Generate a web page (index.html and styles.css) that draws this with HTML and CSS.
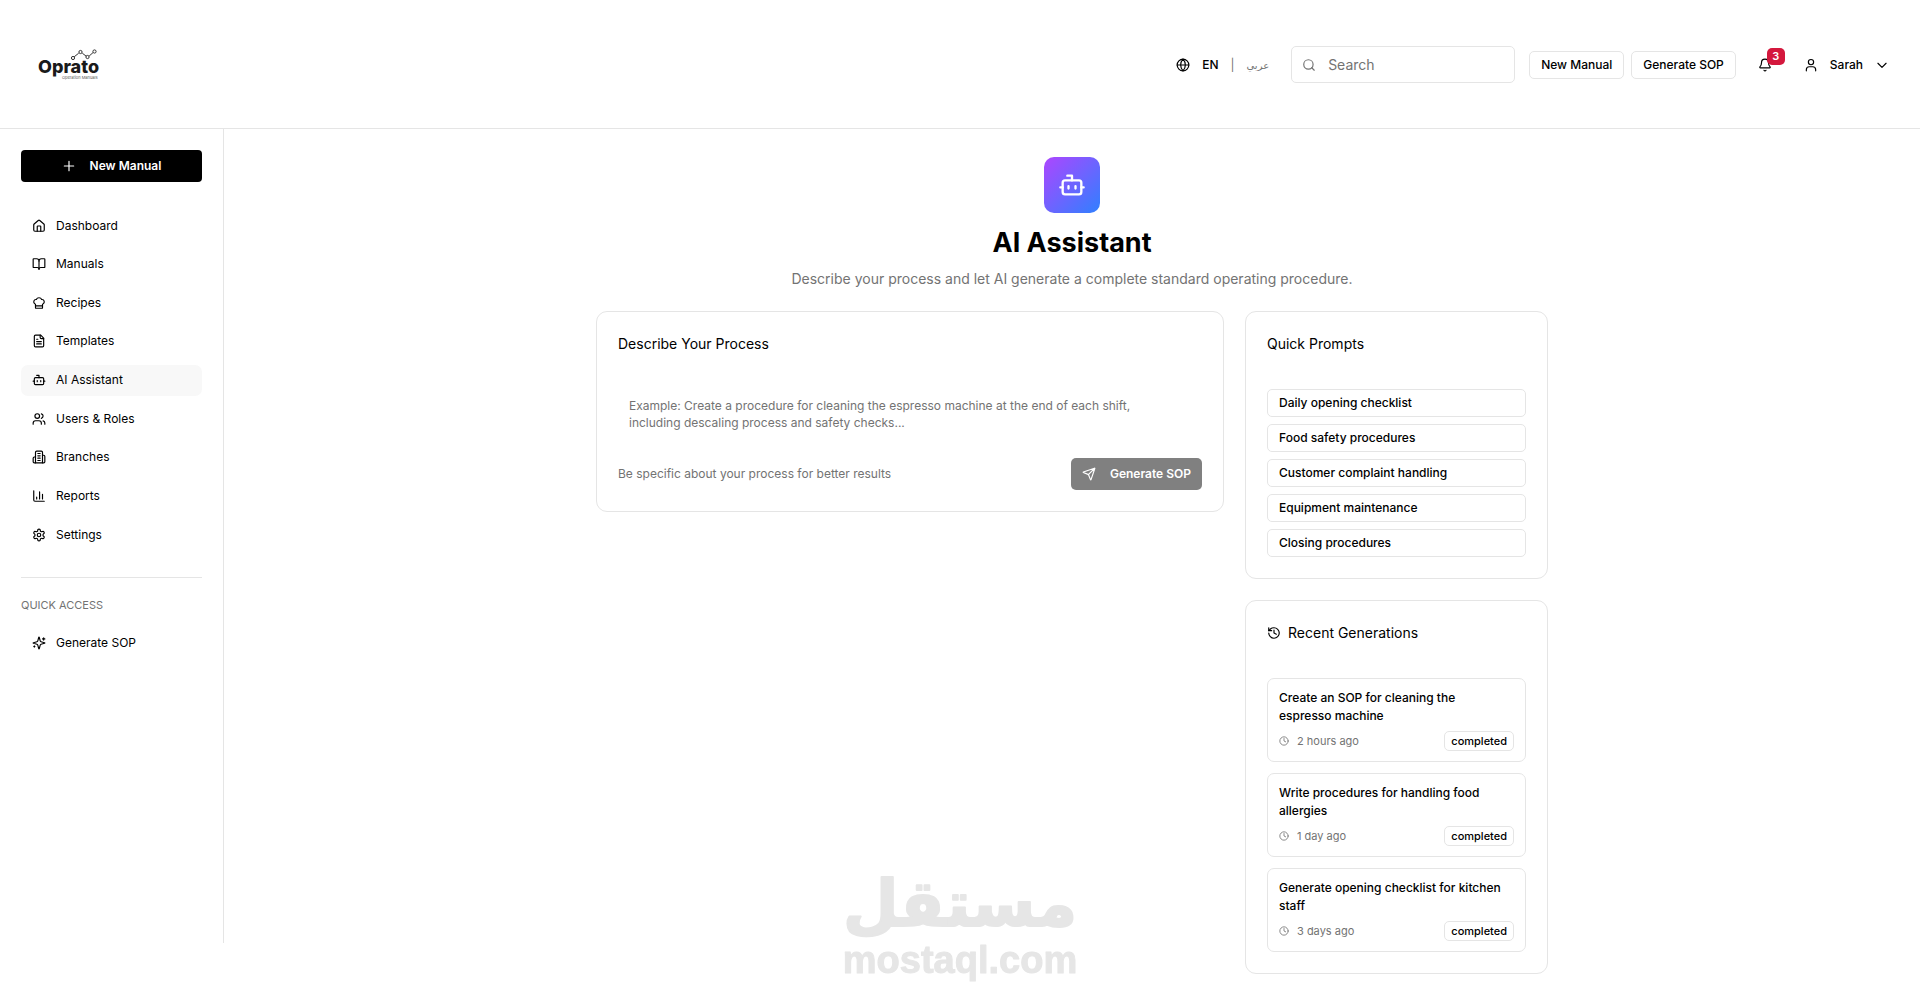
FILE: index.html
```
<!DOCTYPE html>
<html lang="en">
<head>
    <meta charset="UTF-8">
    <meta name="viewport" content="width=device-width, initial-scale=1.0">
    <title>Oprato - AI Assistant</title>
    <link rel="stylesheet" href="styles.css">
</head>
<body>

    <!-- Header -->
    <header class="header">
        <a href="#" class="logo" aria-label="Oprato">
            <svg width="64" height="32" viewBox="0 0 64 32">
                <g fill="none" stroke="#333" stroke-width="1">
                    <path d="M37.2 7.8 41.7 4.2M45.3 4.2 49.2 7.2M52.2 7 56 3.6"/>
                    <circle cx="36" cy="9" r="1.6"/>
                    <circle cx="43.5" cy="3" r="1.6"/>
                    <circle cx="50.5" cy="8" r="1.6"/>
                    <circle cx="57.5" cy="2.5" r="1.6"/>
                </g>
                <text class="logo-name" x="1" y="24">Oprato</text>
                <text class="logo-tag" x="25" y="30">Operation Manuals</text>
            </svg>
        </a>

        <div class="header-actions">
            <div class="lang">
                <svg class="icon" viewBox="0 0 24 24"><circle cx="12" cy="12" r="10"/><path d="M12 2a14.5 14.5 0 0 0 0 20 14.5 14.5 0 0 0 0-20M2 12h20"/></svg>
                <button class="lang-btn">EN</button>
                <span class="lang-sep">|</span>
                <button class="lang-btn" lang="ar">عربي</button>
            </div>

            <label class="search">
                <svg class="icon" viewBox="0 0 24 24"><circle cx="11" cy="11" r="8"/><path d="m21 21-4.3-4.3"/></svg>
                <input type="search" placeholder="Search" aria-label="Search">
            </label>

            <div class="header-buttons">
                <button class="btn-outline">New Manual</button>
                <button class="btn-outline">Generate SOP</button>
            </div>

            <button class="bell-btn" aria-label="Notifications">
                <svg class="icon" viewBox="0 0 24 24"><path d="M10.268 21a2 2 0 0 0 3.464 0"/><path d="M3.262 15.326A1 1 0 0 0 4 17h16a1 1 0 0 0 .74-1.673C19.41 13.956 18 12.499 18 8A6 6 0 0 0 6 8c0 4.499-1.411 5.956-2.738 7.326"/></svg>
                <span class="badge">3</span>
            </button>

            <button class="user-btn">
                <svg class="icon" viewBox="0 0 24 24"><circle cx="12" cy="7" r="4.5"/><path d="M4 22v-2a5 5 0 0 1 5-5h6a5 5 0 0 1 5 5v2"/></svg>
                <span>Sarah</span>
                <svg class="icon" viewBox="0 0 24 24"><path d="m5 9 7 7 7-7"/></svg>
            </button>
        </div>
    </header>

    <div class="layout">
        <!-- Sidebar -->
        <aside class="sidebar">
            <button class="new-manual">
                <svg class="icon" viewBox="0 0 24 24"><path d="M4 12h16M12 4v16"/></svg>
                New Manual
            </button>

            <nav class="nav">
                <a href="#" class="nav-item">
                    <svg class="icon" viewBox="0 0 24 24"><path d="M15 21v-8a1 1 0 0 0-1-1h-4a1 1 0 0 0-1 1v8"/><path d="M3 10a2 2 0 0 1 .709-1.528l7-5.999a2 2 0 0 1 2.582 0l7 5.999A2 2 0 0 1 21 10v9a2 2 0 0 1-2 2H5a2 2 0 0 1-2-2z"/></svg>
                    Dashboard
                </a>
                <a href="#" class="nav-item">
                    <svg class="icon" viewBox="0 0 24 24"><path d="M12 7v14"/><path d="M3 18a1 1 0 0 1-1-1V4a1 1 0 0 1 1-1h5a4 4 0 0 1 4 4 4 4 0 0 1 4-4h5a1 1 0 0 1 1 1v13a1 1 0 0 1-1 1h-6a3 3 0 0 0-3 3 3 3 0 0 0-3-3z"/></svg>
                    Manuals
                </a>
                <a href="#" class="nav-item">
                    <svg class="icon" viewBox="0 0 24 24"><path d="M17 21a1 1 0 0 0 1-1v-5.35c0-.457.316-.844.727-1.041a4 4 0 0 0-2.134-7.589 5 5 0 0 0-9.186 0 4 4 0 0 0-2.134 7.588c.411.198.727.585.727 1.041V20a1 1 0 0 0 1 1Z"/><path d="M6 17h12"/></svg>
                    Recipes
                </a>
                <a href="#" class="nav-item">
                    <svg class="icon" viewBox="0 0 24 24"><path d="M15 2H6a2 2 0 0 0-2 2v16a2 2 0 0 0 2 2h12a2 2 0 0 0 2-2V7Z"/><path d="M14 2v4a2 2 0 0 0 2 2h4M10 9H8M16 13H8M16 17H8"/></svg>
                    Templates
                </a>
                <a href="#" class="nav-item active">
                    <svg class="icon" viewBox="0 0 24 24"><path d="M12 8V4H8"/><rect width="16" height="12" x="4" y="8" rx="2"/><path d="M2 14h2M20 14h2M15 13v2M9 13v2"/></svg>
                    AI Assistant
                </a>
                <a href="#" class="nav-item">
                    <svg class="icon" viewBox="0 0 24 24"><path d="M16 21v-2a4 4 0 0 0-4-4H6a4 4 0 0 0-4 4v2"/><circle cx="9" cy="7" r="4"/><path d="M22 21v-2a4 4 0 0 0-3-3.87M16 3.13a4 4 0 0 1 0 7.75"/></svg>
                    Users &amp; Roles
                </a>
                <a href="#" class="nav-item">
                    <svg class="icon" viewBox="0 0 24 24"><path d="M6 22V4a2 2 0 0 1 2-2h8a2 2 0 0 1 2 2v18Z"/><path d="M6 12H4a2 2 0 0 0-2 2v6a2 2 0 0 0 2 2h2M18 9h2a2 2 0 0 1 2 2v9a2 2 0 0 1-2 2h-2M10 6h4M10 10h4M10 14h4M10 18h4"/></svg>
                    Branches
                </a>
                <a href="#" class="nav-item">
                    <svg class="icon" viewBox="0 0 24 24"><path d="M3 3v16a2 2 0 0 0 2 2h16M18 17V9M13 17V5M8 17v-3"/></svg>
                    Reports
                </a>
                <a href="#" class="nav-item">
                    <svg class="icon" viewBox="0 0 24 24"><path d="M12.22 2h-.44a2 2 0 0 0-2 2v.18a2 2 0 0 1-1 1.73l-.43.25a2 2 0 0 1-2 0l-.15-.08a2 2 0 0 0-2.73.73l-.22.38a2 2 0 0 0 .73 2.73l.15.1a2 2 0 0 1 1 1.72v.51a2 2 0 0 1-1 1.74l-.15.09a2 2 0 0 0-.73 2.73l.22.38a2 2 0 0 0 2.73.73l.15-.08a2 2 0 0 1 2 0l.43.25a2 2 0 0 1 1 1.73V20a2 2 0 0 0 2 2h.44a2 2 0 0 0 2-2v-.18a2 2 0 0 1 1-1.73l.43-.25a2 2 0 0 1 2 0l.15.08a2 2 0 0 0 2.73-.73l.22-.39a2 2 0 0 0-.73-2.73l-.15-.08a2 2 0 0 1-1-1.74v-.5a2 2 0 0 1 1-1.74l.15-.09a2 2 0 0 0 .73-2.73l-.22-.38a2 2 0 0 0-2.73-.73l-.15.08a2 2 0 0 1-2 0l-.43-.25a2 2 0 0 1-1-1.73V4a2 2 0 0 0-2-2z"/><circle cx="12" cy="12" r="3"/></svg>
                    Settings
                </a>
            </nav>

            <div class="quick-access">
                <h2 class="quick-title">QUICK ACCESS</h2>
                <a href="#" class="nav-item">
                    <svg class="icon" viewBox="0 0 24 24"><path d="M9.937 15.5A2 2 0 0 0 8.5 14.063l-6.135-1.582a.5.5 0 0 1 0-.962L8.5 9.936A2 2 0 0 0 9.937 8.5l1.582-6.135a.5.5 0 0 1 .963 0L14.063 8.5A2 2 0 0 0 15.5 9.937l6.135 1.581a.5.5 0 0 1 0 .964L15.5 14.063a2 2 0 0 0-1.437 1.437l-1.582 6.135a.5.5 0 0 1-.963 0z"/><path d="M20 3v4M22 5h-4M4 17v2M5 18H3"/></svg>
                    Generate SOP
                </a>
            </div>
        </aside>

        <!-- Main content -->
        <main class="main">
            <div class="content">
                <div class="intro">
                    <div class="intro-icon">
                        <svg class="icon" viewBox="0 0 24 24"><path d="M12 8V4H8"/><rect width="16" height="12" x="4" y="8" rx="2"/><path d="M2 14h2M20 14h2M15 13v2M9 13v2"/></svg>
                    </div>
                    <h1>AI Assistant</h1>
                    <p>Describe your process and let AI generate a complete standard operating procedure.</p>
                </div>

                <div class="columns">
                    <section class="card">
                        <h2 class="card-title"><label for="process">Describe Your Process</label></h2>
                        <textarea id="process" class="process-input" rows="2" placeholder="Example: Create a procedure for cleaning the espresso machine at the end of each shift, including descaling process and safety checks..."></textarea>
                        <div class="process-footer">
                            <span>Be specific about your process for better results</span>
                            <button class="generate-btn" disabled>
                                <svg class="icon" viewBox="0 0 24 24"><path d="M14.536 21.686a.5.5 0 0 0 .937-.024l6.5-19a.496.496 0 0 0-.635-.635l-19 6.5a.5.5 0 0 0-.024.937l7.93 3.18a2 2 0 0 1 1.112 1.11zM21.854 2.147l-10.94 10.939"/></svg>
                                Generate SOP
                            </button>
                        </div>
                    </section>

                    <div class="side">
                        <section class="card">
                            <h2 class="card-title">Quick Prompts</h2>
                            <div class="prompts">
                                <button class="btn-outline">Daily opening checklist</button>
                                <button class="btn-outline">Food safety procedures</button>
                                <button class="btn-outline">Customer complaint handling</button>
                                <button class="btn-outline">Equipment maintenance</button>
                                <button class="btn-outline">Closing procedures</button>
                            </div>
                        </section>

                        <section class="card">
                            <h2 class="card-title">
                                <svg class="icon" viewBox="0 0 24 24"><path d="M3 12a9 9 0 1 0 9-9 9.75 9.75 0 0 0-6.74 2.74L3 8"/><path d="M3 3v5h5M12 7v5l4 2"/></svg>
                                Recent Generations
                            </h2>
                            <div class="recent">
                                <article class="recent-item">
                                    <h3>Create an SOP for cleaning the espresso machine</h3>
                                    <div class="recent-meta">
                                        <svg class="icon" viewBox="0 0 24 24"><circle cx="12" cy="12" r="10"/><path d="M12 6v6l4 2"/></svg>
                                        <span>2 hours ago</span>
                                        <span class="status">completed</span>
                                    </div>
                                </article>
                                <article class="recent-item">
                                    <h3>Write procedures for handling food allergies</h3>
                                    <div class="recent-meta">
                                        <svg class="icon" viewBox="0 0 24 24"><circle cx="12" cy="12" r="10"/><path d="M12 6v6l4 2"/></svg>
                                        <span>1 day ago</span>
                                        <span class="status">completed</span>
                                    </div>
                                </article>
                                <article class="recent-item">
                                    <h3>Generate opening checklist for kitchen staff</h3>
                                    <div class="recent-meta">
                                        <svg class="icon" viewBox="0 0 24 24"><circle cx="12" cy="12" r="10"/><path d="M12 6v6l4 2"/></svg>
                                        <span>3 days ago</span>
                                        <span class="status">completed</span>
                                    </div>
                                </article>
                            </div>
                        </section>
                    </div>
                </div>
            </div>
        </main>
    </div>

    <!-- Watermark -->
    <div class="watermark">
        <svg width="240" height="116" viewBox="0 0 240 116">
            <text class="watermark-ar" x="120" y="52" text-anchor="middle">مستقل</text>
            <text class="watermark-en" x="120" y="99" text-anchor="middle">mostaql.com</text>
        </svg>
    </div>

</body>
</html>
```
FILE: styles.css
```
* {
    box-sizing: border-box;
    margin: 0;
    padding: 0;
}

body {
    font-family: Inter, "Noto Sans", sans-serif;
    font-size: 12px;
    line-height: 18px;
    color: #000;
    background-color: #fff;
}

a {
    color: inherit;
    text-decoration: none;
}

button, input, textarea {
    font: inherit;
    color: inherit;
    background: none;
    border: none;
}

button {
    cursor: pointer;
}

.icon {
    width: 14px;
    height: 14px;
    flex-shrink: 0;
    fill: none;
    stroke: currentColor;
    stroke-width: 2;
    stroke-linecap: round;
    stroke-linejoin: round;
}

/* Header */
.header {
    display: flex;
    justify-content: space-between;
    align-items: center;
    padding: 46px 24px 45px 37px;
    border-bottom: 1px solid #e5e5e5;
}

.logo svg {
    display: block;
}

.logo-name {
    font-size: 18px;
    font-weight: 800;
    fill: #1a1a1a;
}

.logo-tag {
    font-size: 4px;
    fill: #555;
}

.header-actions {
    display: flex;
    align-items: center;
    gap: 14px;
}

.lang {
    display: flex;
    align-items: center;
    gap: 12px;
    margin-right: 8px;
}

.lang-btn {
    font-weight: 500;
}

.lang-btn[lang="ar"] {
    font-family: Inter, "DejaVu Sans", sans-serif;
    font-size: 10px;
    font-weight: 400;
    color: #737373;
}

.lang-sep {
    color: #737373;
}

.search {
    display: flex;
    align-items: center;
    gap: 12px;
    width: 224px;
    height: 37px;
    padding: 0 10px;
    border: 1px solid #e5e5e5;
    border-radius: 5px;
    color: #737373;
}

.search input {
    flex: 1;
    min-width: 0;
    font-size: 14px;
    outline: none;
}

.search input::placeholder,
.process-input::placeholder {
    color: #737373;
    opacity: 1;
}

.header-buttons {
    display: flex;
    gap: 7px;
}

.btn-outline {
    height: 28px;
    padding: 0 11px;
    border: 1px solid #e5e5e5;
    border-radius: 5px;
    font-weight: 500;
    white-space: nowrap;
}

.bell-btn {
    position: relative;
    display: flex;
    padding: 7px;
    margin-left: 1px;
}

.badge {
    position: absolute;
    top: -3px;
    right: -6px;
    width: 18px;
    height: 17px;
    border-radius: 5px;
    background-color: #d4183d;
    color: #fff;
    font-size: 11px;
    font-weight: 600;
    line-height: 16px;
    text-align: center;
}

.user-btn {
    display: flex;
    align-items: center;
    gap: 12px;
    padding: 7px;
    margin-left: 4px;
    font-weight: 500;
}

/* Sidebar */
.layout {
    display: flex;
    align-items: flex-start;
}

.sidebar {
    width: 224px;
    min-height: calc(100vh - 188px);
    padding: 21px;
    border-right: 1px solid #e5e5e5;
    flex-shrink: 0;
}

.new-manual {
    display: flex;
    align-items: center;
    justify-content: center;
    gap: 14px;
    width: 100%;
    height: 32px;
    border-radius: 4px;
    background-color: #000;
    color: #fff;
    font-weight: 600;
}

.nav {
    display: flex;
    flex-direction: column;
    justify-content: space-between;
    min-height: 340px;
    margin-top: 28px;
}

.nav-item {
    display: flex;
    align-items: center;
    gap: 10px;
    height: 31px;
    padding: 0 11px;
    border-radius: 7px;
}

.nav-item.active {
    background-color: #f8f8f8;
}

.quick-access {
    margin-top: 27px;
    padding-top: 18px;
    border-top: 1px solid #e5e5e5;
}

.quick-title {
    margin-bottom: 13px;
    font-size: 11px;
    font-weight: 400;
    color: #737373;
}

/* Main */
.main {
    flex: 1;
    min-width: 0;
    padding: 28px;
}

.content {
    max-width: 952px;
    margin: 0 auto;
}

.intro {
    display: flex;
    flex-direction: column;
    align-items: center;
    text-align: center;
}

.intro-icon {
    display: flex;
    align-items: center;
    justify-content: center;
    width: 56px;
    height: 56px;
    border-radius: 10px;
    background: linear-gradient(135deg, #ad46ff, #3080ff);
    color: #fff;
}

.intro-icon .icon {
    width: 28px;
    height: 28px;
}

.intro h1 {
    margin-top: 14px;
    font-size: 27px;
    font-weight: 700;
    line-height: 32px;
}

.intro p {
    margin-top: 10px;
    font-size: 14px;
    line-height: 20px;
    color: #737373;
}

.columns {
    display: grid;
    grid-template-columns: minmax(0, 628fr) minmax(0, 303fr);
    align-items: start;
    gap: 21px;
    margin-top: 22px;
}

.side {
    display: flex;
    flex-direction: column;
    gap: 21px;
}

.card {
    padding: 20px 21px 21px;
    border: 1px solid #e5e5e5;
    border-radius: 11px;
}

.card-title {
    display: flex;
    align-items: center;
    gap: 7px;
    margin-bottom: 33px;
    font-size: 14px;
    font-weight: 400;
    line-height: 24px;
}

.process-input {
    display: block;
    width: 100%;
    height: 55px;
    padding: 8px 21px 8px 11px;
    line-height: 17px;
    resize: none;
    outline: none;
}

.process-footer {
    display: flex;
    align-items: center;
    justify-content: space-between;
    margin-top: 14px;
    color: #737373;
}

.generate-btn {
    display: flex;
    align-items: center;
    gap: 14px;
    height: 32px;
    padding: 0 11px;
    border-radius: 5px;
    background-color: #808080;
    color: #fff;
    font-weight: 600;
}

.prompts {
    display: flex;
    flex-direction: column;
    gap: 7px;
}

.prompts .btn-outline {
    text-align: left;
}

.recent {
    display: flex;
    flex-direction: column;
    gap: 11px;
}

.recent-item {
    padding: 10px 11px;
    border: 1px solid #e5e5e5;
    border-radius: 7px;
}

.recent-item h3 {
    margin-bottom: 6px;
    padding-right: 7px;
    font-size: 12px;
    font-weight: 500;
}

.recent-meta {
    display: flex;
    align-items: center;
    gap: 8px;
    font-size: 11px;
    color: #737373;
}

.recent-meta .icon {
    width: 10px;
    height: 10px;
}

.status {
    margin-left: auto;
    padding: 0 6px;
    border: 1px solid #e5e5e5;
    border-radius: 5px;
    font-weight: 500;
    color: #000;
}

/* Watermark over the page */
.watermark {
    position: fixed;
    bottom: 12px;
    left: 50%;
    transform: translateX(-50%);
    pointer-events: none;
}

.watermark svg {
    display: block;
    overflow: visible;
}

.watermark text {
    fill: #e6e6e6;
    stroke: #e6e6e6;
    stroke-linejoin: round;
}

.watermark-ar {
    font-family: "DejaVu Sans", sans-serif;
    font-size: 64px;
    font-weight: 700;
    stroke-width: 2;
}

.watermark-en {
    font-family: "Liberation Sans", sans-serif;
    font-size: 38px;
    font-weight: 700;
    stroke-width: 1;
}
```
